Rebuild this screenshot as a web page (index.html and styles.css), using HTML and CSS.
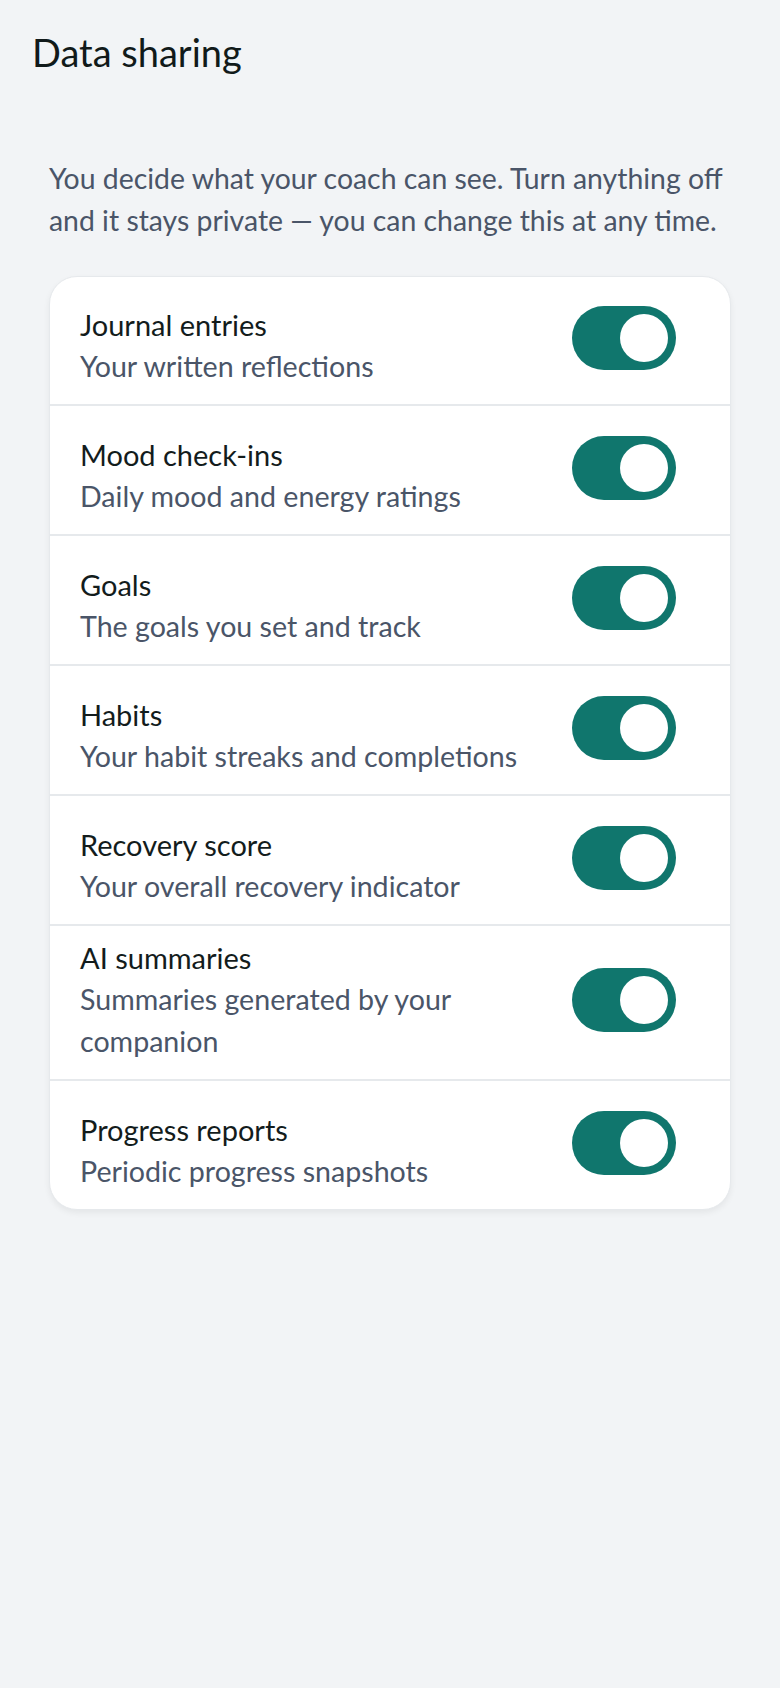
FILE: index.html
```html
<!DOCTYPE html>
<html lang="en">
<head>
    <meta charset="UTF-8">
    <meta name="viewport" content="width=device-width, initial-scale=1.0">
    <title>Data sharing</title>
    <link rel="stylesheet" href="styles.css">
</head>
<body>
    <header class="topbar">
        <h1>Data sharing</h1>
    </header>

    <main class="content">
        <p class="intro">You decide what your coach can see. Turn anything off and it stays private — you can change this at any time.</p>

        <section class="card">
            <div class="row">
                <div class="row-text">
                    <div class="row-title">Journal entries</div>
                    <div class="row-desc">Your written reflections</div>
                </div>
                <span class="switch on" role="switch" aria-checked="true"><span class="knob"></span></span>
            </div>
            <div class="row">
                <div class="row-text">
                    <div class="row-title">Mood check-ins</div>
                    <div class="row-desc">Daily mood and energy ratings</div>
                </div>
                <span class="switch on" role="switch" aria-checked="true"><span class="knob"></span></span>
            </div>
            <div class="row">
                <div class="row-text">
                    <div class="row-title">Goals</div>
                    <div class="row-desc">The goals you set and track</div>
                </div>
                <span class="switch on" role="switch" aria-checked="true"><span class="knob"></span></span>
            </div>
            <div class="row">
                <div class="row-text">
                    <div class="row-title">Habits</div>
                    <div class="row-desc">Your habit streaks and completions</div>
                </div>
                <span class="switch on" role="switch" aria-checked="true"><span class="knob"></span></span>
            </div>
            <div class="row">
                <div class="row-text">
                    <div class="row-title">Recovery score</div>
                    <div class="row-desc">Your overall recovery indicator</div>
                </div>
                <span class="switch on" role="switch" aria-checked="true"><span class="knob"></span></span>
            </div>
            <div class="row">
                <div class="row-text">
                    <div class="row-title">AI summaries</div>
                    <div class="row-desc">Summaries generated by your companion</div>
                </div>
                <span class="switch on" role="switch" aria-checked="true"><span class="knob"></span></span>
            </div>
            <div class="row">
                <div class="row-text">
                    <div class="row-title">Progress reports</div>
                    <div class="row-desc">Periodic progress snapshots</div>
                </div>
                <span class="switch on" role="switch" aria-checked="true"><span class="knob"></span></span>
            </div>
        </section>
    </main>
</body>
</html>
```

FILE: styles.css
```css
* {
    box-sizing: border-box;
}

body {
    margin: 0;
    min-height: 100vh;
    background-color: #f2f4f6;
    font-family: 'Lato', 'Noto Sans', sans-serif;
    color: #131c1c;
}

.topbar {
    padding: 28px 32px 0;
}

.topbar h1 {
    margin: 0;
    font-size: 38px;
    line-height: 48px;
    font-weight: 400;
    color: #111a1a;
}

.content {
    padding: 81px 49px 0;
}

.intro {
    margin: 0 0 35px;
    font-size: 28.4px;
    line-height: 42px;
    color: #4a5568;
}

.card {
    background-color: #fff;
    border: 1px solid #e6e9ec;
    border-radius: 28px;
    box-shadow: 0 3px 6px rgba(0,0,0,0.06);
    overflow: hidden;
}

.row {
    display: flex;
    align-items: flex-end;
    gap: 32px;
    min-height: 130px;
    padding: 12px 54px 17px 30px;
    border-top: 2px solid #e6e9ec;
}

.row:first-child {
    border-top: none;
    min-height: 127px;
}

.row-text {
    flex: 1;
    min-width: 0;
}

.row-title {
    font-size: 29px;
    line-height: 40px;
    color: #131c1c;
}

.row-desc {
    font-size: 28.6px;
    line-height: 42px;
    color: #4a5568;
}

.switch {
    align-self: center;
    flex-shrink: 0;
    display: flex;
    justify-content: flex-start;
    width: 104px;
    height: 64px;
    padding: 8px;
    border-radius: 32px;
    background-color: #cbd2d9;
}

.switch.on {
    justify-content: flex-end;
    background-color: #10766d;
}

.knob {
    width: 48px;
    height: 48px;
    border-radius: 50%;
    background-color: #fff;
}
```
